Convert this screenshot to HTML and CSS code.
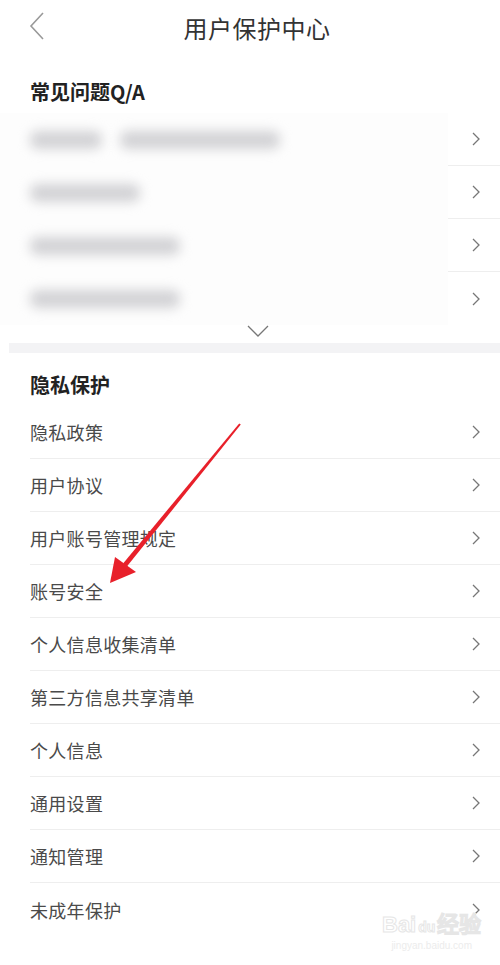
FILE: index.html
```html
<!DOCTYPE html>
<html lang="zh-CN">
<head>
    <meta charset="UTF-8">
    <meta name="viewport" content="width=device-width, initial-scale=1.0">
    <title>用户保护中心</title>
    <link rel="stylesheet" href="styles.css">
</head>
<body>
    <div class="page">
        <header class="topbar">
            <svg class="back" width="16" height="28" viewBox="0 0 16 28"><path d="M14 1 L2 14 L14 27" fill="none" stroke="#999" stroke-width="1.6"/></svg>
            <h1>用户保护中心</h1>
        </header>

        <h2 class="section-title first">常见问题Q/A</h2>
        <div class="qa-list">
            <div class="qa-row">
                <div class="qa-text"><span class="blur" style="width:72px"></span><span class="blur" style="width:160px"></span></div>
                <div class="qa-arrow"><svg width="8" height="14" viewBox="0 0 8 14"><path d="M1 1 L7 7 L1 13" fill="none" stroke="#777" stroke-width="1.3"/></svg></div>
            </div>
            <div class="qa-row">
                <div class="qa-text"><span class="blur" style="width:110px"></span></div>
                <div class="qa-arrow"><svg width="8" height="14" viewBox="0 0 8 14"><path d="M1 1 L7 7 L1 13" fill="none" stroke="#777" stroke-width="1.3"/></svg></div>
            </div>
            <div class="qa-row">
                <div class="qa-text"><span class="blur" style="width:150px"></span></div>
                <div class="qa-arrow"><svg width="8" height="14" viewBox="0 0 8 14"><path d="M1 1 L7 7 L1 13" fill="none" stroke="#777" stroke-width="1.3"/></svg></div>
            </div>
            <div class="qa-row last">
                <div class="qa-text"><span class="blur" style="width:150px"></span></div>
                <div class="qa-arrow"><svg width="8" height="14" viewBox="0 0 8 14"><path d="M1 1 L7 7 L1 13" fill="none" stroke="#777" stroke-width="1.3"/></svg></div>
            </div>
            <div class="more">
                <svg width="22" height="12" viewBox="0 0 22 12"><path d="M1 1 L11 11 L21 1" fill="none" stroke="#777" stroke-width="1.3"/></svg>
            </div>
        </div>

        <div class="gap"></div>

        <h2 class="section-title">隐私保护</h2>
        <ul class="menu">
            <li><span>隐私政策</span><svg width="8" height="14" viewBox="0 0 8 14"><path d="M1 1 L7 7 L1 13" fill="none" stroke="#777" stroke-width="1.3"/></svg></li>
            <li><span>用户协议</span><svg width="8" height="14" viewBox="0 0 8 14"><path d="M1 1 L7 7 L1 13" fill="none" stroke="#777" stroke-width="1.3"/></svg></li>
            <li><span>用户账号管理规定</span><svg width="8" height="14" viewBox="0 0 8 14"><path d="M1 1 L7 7 L1 13" fill="none" stroke="#777" stroke-width="1.3"/></svg></li>
            <li><span>账号安全</span><svg width="8" height="14" viewBox="0 0 8 14"><path d="M1 1 L7 7 L1 13" fill="none" stroke="#777" stroke-width="1.3"/></svg></li>
            <li><span>个人信息收集清单</span><svg width="8" height="14" viewBox="0 0 8 14"><path d="M1 1 L7 7 L1 13" fill="none" stroke="#777" stroke-width="1.3"/></svg></li>
            <li><span>第三方信息共享清单</span><svg width="8" height="14" viewBox="0 0 8 14"><path d="M1 1 L7 7 L1 13" fill="none" stroke="#777" stroke-width="1.3"/></svg></li>
            <li><span>个人信息</span><svg width="8" height="14" viewBox="0 0 8 14"><path d="M1 1 L7 7 L1 13" fill="none" stroke="#777" stroke-width="1.3"/></svg></li>
            <li><span>通用设置</span><svg width="8" height="14" viewBox="0 0 8 14"><path d="M1 1 L7 7 L1 13" fill="none" stroke="#777" stroke-width="1.3"/></svg></li>
            <li><span>通知管理</span><svg width="8" height="14" viewBox="0 0 8 14"><path d="M1 1 L7 7 L1 13" fill="none" stroke="#777" stroke-width="1.3"/></svg></li>
            <li><span>未成年保护</span><svg width="8" height="14" viewBox="0 0 8 14"><path d="M1 1 L7 7 L1 13" fill="none" stroke="#777" stroke-width="1.3"/></svg></li>
        </ul>

        <!-- annotation arrow drawn over the screenshot -->
        <svg class="pointer" width="500" height="965" viewBox="0 0 500 965">
            <polygon points="239.2,423.4 240.8,424.6 126.9,566.6 123.1,563.4" fill="#e8202a"/>
            <polygon points="110,583 115,557 136,572" fill="#e8202a"/>
        </svg>

        <div class="watermark">
            <div class="wm-logo">Bai<span class="paw">du</span>经验</div>
            <div class="wm-url">jingyan.baidu.com</div>
        </div>
    </div>
</body>
</html>
```

FILE: styles.css
```css
body {
    margin: 0;
    background: #fff;
    font-family: "Noto Sans CJK SC", "Noto Sans", sans-serif;
}
.page {
    position: relative;
    width: 500px;
    height: 965px;
    overflow: hidden;
}
.topbar {
    height: 54px;
    display: flex;
    align-items: center;
    justify-content: center;
    padding-left: 14px;
    position: relative;
}
.topbar h1 {
    margin: 0;
    font-size: 24px;
    font-weight: normal;
    color: #333;
    letter-spacing: 0.5px;
}
.back {
    position: absolute;
    left: 29px;
    top: 12px;
}
.section-title {
    margin: 0;
    padding: 19px 0 0 30px;
    height: 34px;
    line-height: 26px;
    font-size: 20px;
    font-weight: bold;
    color: #222;
}
.section-title.first {
    padding-top: 25px;
}
.qa-row {
    height: 53px;
    display: flex;
}
.qa-text {
    flex: 1;
    display: flex;
    align-items: center;
    gap: 18px;
    padding-left: 30px;
    background: #fdfdfd;
}
.blur {
    display: block;
    height: 18px;
    background: #d2d2d5;
    border-radius: 8px;
    filter: blur(6px);
}
.qa-arrow {
    width: 52px;
    display: flex;
    align-items: center;
    padding-left: 24px;
    box-sizing: border-box;
    border-bottom: 1px solid #eee;
}
.qa-row.last .qa-arrow {
    border-bottom: none;
}
.more {
    height: 18px;
    display: flex;
    justify-content: center;
    align-items: flex-start;
    padding-left: 16px;
}
.gap {
    height: 10px;
    margin-left: 9px;
    background: #f3f3f5;
}
.menu {
    list-style: none;
    margin: 0;
    padding: 0 0 0 30px;
}
.menu li {
    height: 53px;
    display: flex;
    align-items: center;
    justify-content: space-between;
    padding-right: 20px;
    box-sizing: border-box;
    border-bottom: 1px solid #eee;
    font-size: 18px;
    letter-spacing: 0.3px;
    color: #4a4a4a;
}
.menu li:last-child {
    border-bottom: none;
}
.pointer {
    position: absolute;
    left: 0;
    top: 0;
    pointer-events: none;
}
.watermark {
    position: absolute;
    left: 382px;
    top: 912px;
    color: #fff;
    text-align: center;
}
.wm-logo {
    font-family: "Liberation Sans", sans-serif;
    font-size: 22px;
    font-weight: bold;
    line-height: 26px;
    -webkit-text-stroke: 1px #e6e6e6;
}
.paw {
    font-size: 14px;
    margin: 0 2px;
}
.wm-url {
    font-family: "Liberation Sans", sans-serif;
    font-size: 10px;
    color: #ececec;
}
```
